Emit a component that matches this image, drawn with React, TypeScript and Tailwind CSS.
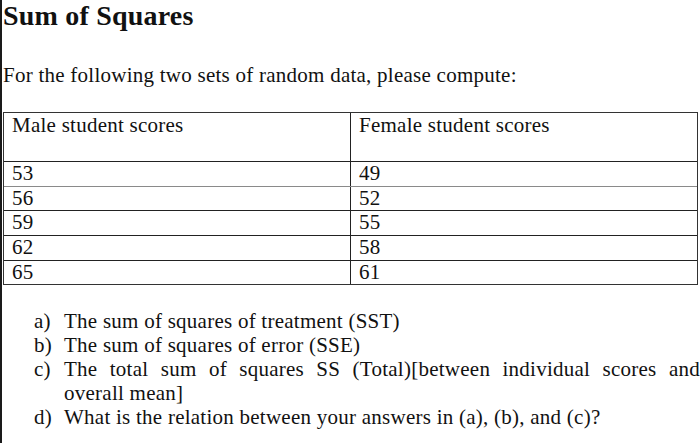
import React from "react";

const serif = { fontFamily: '"Liberation Serif", "Times New Roman", serif' };

const rows: [string, string, boolean][] = [
  ["53", "49", true],
  ["56", "52", false],
  ["59", "55", false],
  ["62", "58", false],
  ["65", "61", false],
];
const rowH = ["h-[25px]", "h-[24px]", "h-[25px]", "h-[25px]", "h-[23px]"];

export default function App() {
  return (
    <div
      className="w-[700px] h-[443px] overflow-hidden bg-white border-l-2 border-[#1a1a1a] pl-[1px] text-[#111] tracking-[0.25px]"
      style={serif}
    >
      <h1 className="text-[28px] leading-[32px] font-bold tracking-[0.2px]">Sum of Squares</h1>
      <p className="mt-[31px] text-[21px] leading-[24px]">
        For the following two sets of random data, please compute:
      </p>
      <div className="mt-[25px] w-[695px] border border-[#333] text-[21px] leading-[23px]">
        <div className="flex h-[49px] border-b border-[#222]">
          <div className="w-[347px] border-r border-[#222] pl-[8px] pt-[1px]">Male student scores</div>
          <div className="flex-1 pl-[8px] pt-[1px]">Female student scores</div>
        </div>
        {rows.map(([m, f, gray], i) => (
          <div
            key={m}
            className={`flex ${rowH[i]} ${i < 4 ? "border-b" : ""} ${gray ? "border-[#8a8a8a]" : "border-[#222]"}`}
          >
            <div className="w-[347px] border-r border-[#222] pl-[8px]">{m}</div>
            <div className="flex-1 pl-[8px]">{f}</div>
          </div>
        ))}
      </div>
      <div className="mt-[24px] text-[21px] leading-[24px] w-[697px]">
        {[
          ["a)", "The sum of squares of treatment (SST)"],
          ["b)", "The sum of squares of error (SSE)"],
        ].map(([k, t]) => (
          <div key={k} className="flex">
            <div className="w-[61px] pl-[31px] shrink-0">{k}</div>
            <div className="flex-1">{t}</div>
          </div>
        ))}
        <div className="flex">
          <div className="w-[61px] pl-[31px] shrink-0">c)</div>
          <div className="flex-1">
            <span className="block text-justify [text-align-last:justify]">
              The total sum of squares SS (Total)[between individual scores and
            </span>
            <span className="block">overall mean]</span>
          </div>
        </div>
        <div className="flex">
          <div className="w-[61px] pl-[31px] shrink-0">d)</div>
          <div className="flex-1">What is the relation between your answers in (a), (b), and (c)?</div>
        </div>
      </div>
    </div>
  );
}
